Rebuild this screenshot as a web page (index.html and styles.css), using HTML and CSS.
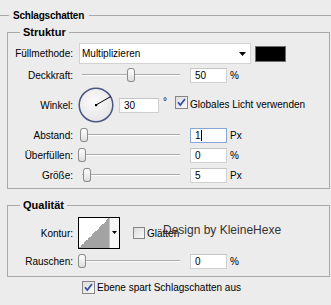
FILE: index.html
```html
<!DOCTYPE html>
<html>
<head>
<meta charset="utf-8">
<link rel="stylesheet" href="styles.css">
</head>
<body>
<div class="panel">
  <div class="main-title"><span>Schlagschatten</span></div>

  <section class="group struktur">
    <div class="group-title">Struktur</div>

    <div class="row row-mode">
      <span class="label">Füllmethode:</span>
      <div class="select">
        <span>Multiplizieren</span>
        <svg class="arrow" width="7" height="4" viewBox="0 0 7 4"><polygon points="0,0 7,0 3.5,4" fill="#000"/></svg>
      </div>
      <div class="swatch"></div>
    </div>

    <div class="row row-first">
      <span class="label">Deckkraft:</span>
      <div class="slider"><div class="track"></div><div class="thumb" style="left:49px"></div></div>
      <div class="field">50</div>
      <span class="unit">%</span>
    </div>

    <div class="row row-angle">
      <span class="label">Winkel:</span>
      <svg class="dial" width="36" height="36" viewBox="0 0 36 36">
        <defs>
          <radialGradient id="dg" cx="45%" cy="40%" r="60%">
            <stop offset="0" stop-color="#fbfbfb"/>
            <stop offset="1" stop-color="#e6e6e6"/>
          </radialGradient>
        </defs>
        <circle cx="18" cy="18" r="16.8" fill="url(#dg)" stroke="#4b5784" stroke-width="1.5"/>
        <line x1="18" y1="18" x2="32.6" y2="9.6" stroke="#000" stroke-width="1"/>
        <rect x="17" y="17" width="2.2" height="2.2" fill="#000"/>
      </svg>
      <div class="field field-angle">30</div>
      <span class="deg">°</span>
      <span class="check check-global">
        <svg width="11" height="11" viewBox="0 0 11 11"><path d="M2 5.2 L4.3 8 L9 2" fill="none" stroke="#3a4fa8" stroke-width="1.8"/></svg>
      </span>
      <span class="check-label">Globales Licht verwenden</span>
    </div>

    <div class="row">
      <span class="label">Abstand:</span>
      <div class="slider"><div class="track"></div><div class="thumb" style="left:2px"></div></div>
      <div class="field field-focus">1<span class="caret"></span></div>
      <span class="unit">Px</span>
    </div>

    <div class="row">
      <span class="label">Überfüllen:</span>
      <div class="slider"><div class="track"></div><div class="thumb" style="left:0px"></div></div>
      <div class="field">0</div>
      <span class="unit">%</span>
    </div>

    <div class="row">
      <span class="label">Größe:</span>
      <div class="slider"><div class="track"></div><div class="thumb" style="left:5px"></div></div>
      <div class="field">5</div>
      <span class="unit">Px</span>
    </div>
  </section>

  <section class="group qualitaet">
    <div class="group-title">Qualität</div>

    <div class="row row-contour">
      <span class="label">Kontur:</span>
      <div class="contour">
        <div class="contour-preview"></div>
        <div class="contour-arrow">
          <svg width="5" height="3" viewBox="0 0 5 3"><polygon points="0,0 5,0 2.5,3" fill="#000"/></svg>
        </div>
      </div>
      <span class="check check-smooth"></span>
      <span class="check-label">Glätten</span>
    </div>

    <div class="row row-noise">
      <span class="label">Rauschen:</span>
      <div class="slider"><div class="track"></div><div class="thumb" style="left:0px"></div></div>
      <div class="field">0</div>
      <span class="unit">%</span>
    </div>
  </section>

  <div class="bottom-row">
    <span class="check">
      <svg width="11" height="11" viewBox="0 0 11 11"><path d="M2 5.2 L4.3 8 L9 2" fill="none" stroke="#3a4fa8" stroke-width="1.8"/></svg>
    </span>
    <span class="check-label">Ebene spart Schlagschatten aus</span>
  </div>

  <div class="watermark">Design by KleineHexe</div>
</div>
</body>
</html>
```

FILE: styles.css
```css
* {
  box-sizing: border-box;
}

html,
body {
  margin: 0;
  padding: 0;
}

body {
  width: 331px;
  height: 305px;
  overflow: hidden;
  background: #ececec;
  font-family: "Liberation Sans", Arial, sans-serif;
  font-size: 10px;
  color: #000;
}

.panel {
  position: relative;
  height: 305px;
  padding-top: 9px;
}

.main-title {
  display: flex;
  align-items: center;
  height: 13px;
  font-size: 10px;
  font-weight: bold;
  line-height: 13px;
  letter-spacing: -0.2px;
}

.main-title::before {
  content: "";
  width: 9px;
  height: 1px;
  margin-right: 4px;
  background: #a9a9a9;
}

.main-title::after {
  content: "";
  flex: 1;
  height: 1px;
  margin-left: 5px;
  background: #a9a9a9;
}

.group {
  width: 323px;
  margin-left: 7px;
  border: 1px solid #a9a9a9;
}

.struktur {
  margin-top: 10px;
  padding-bottom: 3px;
}

.qualitaet {
  margin-top: 16px;
  padding-bottom: 5px;
}

.group-title {
  display: table;
  height: 13px;
  margin: -7px 0 0 12px;
  padding: 0 3px;
  background: #ececec;
  font-size: 11px;
  font-weight: bold;
  line-height: 13px;
}

.row {
  display: flex;
  align-items: center;
  height: 20px;
}

.label {
  width: 65px;
  flex: none;
  text-align: right;
  white-space: nowrap;
}

.row-mode {
  height: 21px;
  margin-top: 4px;
}

.row-first {
  margin-top: 1px;
}

.row-angle {
  height: 40px;
}

.select {
  display: flex;
  align-items: center;
  justify-content: space-between;
  width: 172px;
  height: 21px;
  margin-left: 6px;
  padding: 0 4px 0 2px;
  background: #fff;
  border: 1px solid #d3d3d3;
}

.arrow {
  display: block;
  margin-top: 1px;
}

.swatch {
  width: 31px;
  height: 16px;
  margin-left: 4px;
  background: #000;
  border: 1px solid #6f6f6f;
}

.slider {
  position: relative;
  width: 106px;
  height: 14px;
  margin-left: 5px;
}

.track {
  position: absolute;
  left: 4px;
  top: 6px;
  width: 98px;
  height: 2px;
  border-top: 1px solid #ababab;
  border-bottom: 1px solid #fdfdfd;
}

.thumb {
  position: absolute;
  top: 0;
  width: 8px;
  height: 14px;
  border: 1px solid #8c8c8c;
  border-radius: 3px 3px 3px 3px / 4px 4px 3px 3px;
  background: linear-gradient(#ffffff, #dedede);
}

.field {
  display: flex;
  align-items: center;
  width: 37px;
  height: 15px;
  margin-left: 6px;
  padding-left: 4px;
  background: #fff;
  border: 1px solid #d0d0d0;
  border-top-color: #c4c4c4;
}

.field-focus {
  border-color: #86a6d4;
}

.caret {
  width: 1px;
  height: 11px;
  margin-left: 0;
  background: #000;
}

.unit {
  margin-left: 3px;
}

.dial {
  display: block;
  flex: none;
  margin-left: 5px;
}

.field-angle {
  width: 40px;
  margin-left: 5px;
}

.deg {
  width: 8px;
  margin-left: 4px;
  margin-bottom: 8px;
}

.check {
  display: flex;
  align-items: center;
  justify-content: center;
  width: 13px;
  height: 13px;
  flex: none;
  border: 1px solid #858585;
  background: linear-gradient(135deg, #dcdcdc, #fafafa);
}

.check-global {
  margin-left: 4px;
  margin-bottom: 5px;
}

.check-label {
  margin-left: 2px;
  white-space: nowrap;
}

.row-angle .check-label {
  margin-bottom: 1px;
}

.row-contour {
  height: 32px;
  margin-top: 5px;
}

.contour {
  display: flex;
  width: 42px;
  height: 32px;
  margin-left: 5px;
  border: 1px solid #000;
}

.contour-preview {
  width: 30px;
  background: linear-gradient(to bottom right, #ffffff 50%, #a3a3a3 50%);
}

.contour-arrow {
  display: flex;
  flex: 1;
  align-items: center;
  justify-content: center;
  padding-bottom: 1px;
  border-left: 1px solid #c8c8c8;
  background: #f7f7f7;
}

.check-smooth {
  width: 12px;
  height: 12px;
  margin-left: 13px;
  margin-bottom: 1px;
}

.row-noise {
  margin-top: 2px;
}

.bottom-row {
  display: flex;
  align-items: center;
  height: 13px;
  margin-top: 4px;
  padding-left: 82px;
}

.bottom-row .check-label {
  margin-left: 2px;
}

.watermark {
  position: absolute;
  left: 163px;
  top: 223px;
  font-family: "Liberation Sans", Arial, sans-serif;
  font-size: 12px;
  line-height: 14px;
  color: #333;
  white-space: nowrap;
}
```
